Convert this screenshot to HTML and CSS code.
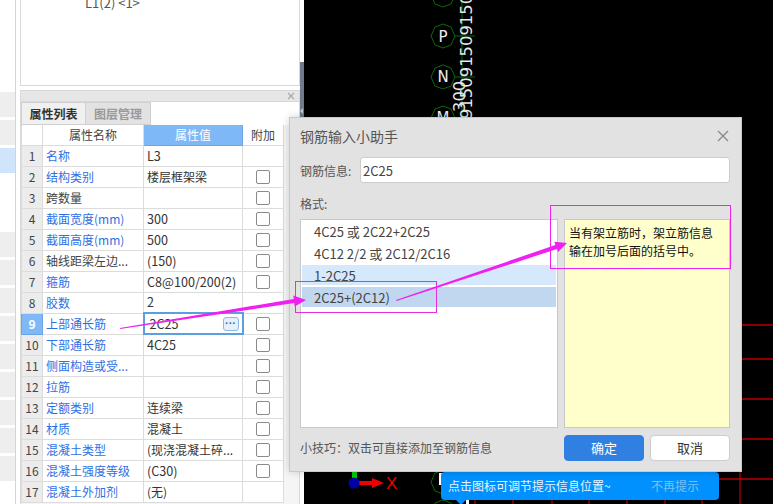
FILE: index.html
```html
<!DOCTYPE html>
<html lang="zh-CN">
<head>
    <meta charset="UTF-8">
    <title>钢筋输入小助手</title>
    <link rel="stylesheet" href="styles.css">
</head>
<body>
    <div class="page">
        <div class="nav">
            <div class="nav-row"></div>
            <div class="nav-row"></div>
            <div class="nav-row active"></div>
            <div class="nav-row blank"></div>
            <div class="nav-row blank"></div>
            <div class="nav-row"></div>
            <div class="nav-row"></div>
            <div class="nav-row"></div>
            <div class="nav-row"></div>
            <div class="nav-row"></div>
            <div class="nav-row"></div>
            <div class="nav-row"></div>
            <div class="nav-row"></div>
            <div class="nav-row"></div>
        </div>

        <div class="side">
            <div class="tree">
                <div class="tree-item">L1(2) &lt;1&gt;</div>
            </div>
            <div class="props">
                <div class="props-bar">
                    <svg class="props-close" width="8" height="8" viewBox="0 0 8 8"><path d="M1 1l6 6M7 1L1 7"/></svg>
                </div>
                <div class="tabs">
                    <div class="tab active">属性列表</div>
                    <div class="tab">图层管理</div>
                </div>
                <div class="table-wrap">
                    <table class="prop-table">
                        <colgroup>
                            <col class="col-num"><col class="col-name"><col class="col-value"><col class="col-add">
                        </colgroup>
                        <tr class="head">
                            <th></th><th>属性名称</th><th class="current">属性值</th><th>附加</th>
                        </tr>
                        <tr><td class="num">1</td><td class="name">名称</td><td class="latin">L3</td><td></td></tr>
                        <tr><td class="num">2</td><td class="name">结构类别</td><td>楼层框架梁</td><td class="add"><input type="checkbox"></td></tr>
                        <tr><td class="num">3</td><td class="name plain">跨数量</td><td></td><td class="add"><input type="checkbox"></td></tr>
                        <tr><td class="num">4</td><td class="name">截面宽度(mm)</td><td class="latin">300</td><td class="add"><input type="checkbox"></td></tr>
                        <tr><td class="num">5</td><td class="name">截面高度(mm)</td><td class="latin">500</td><td class="add"><input type="checkbox"></td></tr>
                        <tr><td class="num">6</td><td class="name plain">轴线距梁左边...</td><td class="latin">(150)</td><td class="add"><input type="checkbox"></td></tr>
                        <tr><td class="num">7</td><td class="name">箍筋</td><td class="latin">C8@100/200(2)</td><td class="add"><input type="checkbox"></td></tr>
                        <tr><td class="num">8</td><td class="name">胶数</td><td class="latin">2</td><td></td></tr>
                        <tr class="selected">
                            <td class="num">9</td><td class="name">上部通长筋</td>
                            <td class="editing latin"><div class="edit-box"><span>2C25</span><span class="more">···</span></div></td>
                            <td class="add"><input type="checkbox"></td>
                        </tr>
                        <tr><td class="num">10</td><td class="name">下部通长筋</td><td class="latin">4C25</td><td class="add"><input type="checkbox"></td></tr>
                        <tr><td class="num">11</td><td class="name">侧面构造或受...</td><td></td><td class="add"><input type="checkbox"></td></tr>
                        <tr><td class="num">12</td><td class="name">拉筋</td><td></td><td class="add"><input type="checkbox"></td></tr>
                        <tr><td class="num">13</td><td class="name">定额类别</td><td>连续梁</td><td class="add"><input type="checkbox"></td></tr>
                        <tr><td class="num">14</td><td class="name">材质</td><td>混凝土</td><td class="add"><input type="checkbox"></td></tr>
                        <tr><td class="num">15</td><td class="name">混凝土类型</td><td>(现浇混凝土碎...</td><td class="add"><input type="checkbox"></td></tr>
                        <tr><td class="num">16</td><td class="name">混凝土强度等级</td><td class="latin">(C30)</td><td class="add"><input type="checkbox"></td></tr>
                        <tr><td class="num">17</td><td class="name">混凝土外加剂</td><td>(无)</td><td></td></tr>
                    </table>
                </div>
            </div>
        </div>

        <div class="rail"><div class="rail-thumb"></div></div>

        <div class="canvas">
            <svg class="drawing" width="469" height="504" viewBox="304 0 469 504">
                <g class="grid">
                    <path d="M462 0V118M455 36H475M455 77H475"/>
                    <polygon points="443,-17 451,-14 455,-5 451,4 443,7 435,4 431,-5 435,-14"/>
                    <polygon points="443,24 451,27 455,36 451,45 443,48 435,45 431,36 435,27"/>
                    <polygon points="443,65 451,68 455,77 451,86 443,89 435,86 431,77 435,68"/>
                    <polygon points="443,106 451,109 455,118 451,127 443,130 435,127 431,118 435,109"/>
                    <polygon points="443,470 451,473 455,482 451,491 443,494 435,491 431,482 435,473"/>
                    <polygon points="443,500 451,503 455,512 435,512 435,503"/>
                </g>
                <text class="axis-label" x="443" y="42">P</text>
                <text class="axis-label" x="443" y="82">N</text>
                <text class="axis-label" x="443" y="123">M</text>
                <text class="dim" transform="translate(472 119) rotate(-90)">9150915091509150</text>
                <text class="dim" transform="translate(465 112) rotate(-90)">300</text>
                <rect class="white" x="439" y="473" width="6" height="12"/>
                <rect class="white" x="466" y="500" width="3" height="4"/>
                <g class="red-dark">
                    <path d="M742 325H773M742 359H773M742 399H773M742 439H773M719 479H773"/>
                </g>
                <g class="red">
                    <path d="M475 500V504M513 500V504M552 500V504M589 500V504M627 500V504M665 500V504M702 500V504M740 472V504"/>
                </g>
                <rect x="352" y="472" width="5" height="8" fill="#00c800"/>
                <polygon points="358,481 372,481 372,478 384,483 372,488 372,485 358,485" fill="#f00000"/>
                <circle cx="354" cy="483" r="5.5" fill="#0000a8"/>
                <text class="axis-x" x="386" y="489">X</text>
            </svg>
        </div>

        <div class="toast">
            <span>点击图标可调节提示信息位置~</span>
            <span class="toast-off">不再提示</span>
        </div>

        <div class="dialog">
            <div class="dialog-title">
                <span>钢筋输入小助手</span>
                <svg class="dialog-close" width="12" height="12" viewBox="0 0 12 12"><path d="M1 1l10 10M11 1L1 11"/></svg>
            </div>
            <div class="field">
                <label for="rebar">钢筋信息:</label>
                <input id="rebar" type="text" value="2C25">
            </div>
            <div class="format-label">格式:</div>
            <div class="format-body">
                <div class="format-list">
                    <div class="format-item">4C25 或 2C22+2C25</div>
                    <div class="format-item">4C12 2/2 或 2C12/2C16</div>
                    <div class="format-item hover">1-2C25</div>
                    <div class="format-item picked">2C25+(2C12)</div>
                </div>
                <div class="format-tip">当有架立筋时&#65292;架立筋信息输在加号后面的括号中。</div>
            </div>
            <div class="dialog-foot">
                <span class="hint">小技巧&#65306;双击可直接添加至钢筋信息</span>
                <div class="buttons">
                    <button class="btn primary">确定</button>
                    <button class="btn">取消</button>
                </div>
            </div>
        </div>

        <svg class="marks" width="773" height="504" viewBox="0 0 773 504">
            <rect class="mark-box dim-pink" x="295.5" y="281.5" width="141" height="31"/>
            <rect class="mark-box" x="550.5" y="205.5" width="180" height="63"/>
            <polygon class="mark-arrow" points="120,328 120,329 294.2,303 294.7,306.5 306,300 293.3,295.5 293.8,299"/>
            <polygon class="mark-arrow" points="396,300 396.5,301 557,249 558,252 567,243 554.4,241.8 555.3,245"/>
        </svg>
    </div>
</body>
</html>
```

FILE: styles.css
```css
* { box-sizing: border-box; }
body {
    margin: 0;
    background: #fff;
    font-family: "Noto Sans CJK SC", "Liberation Sans", sans-serif;
    font-size: 12px;
    color: #333;
}
.page {
    position: relative;
    display: flex;
    width: 773px;
    height: 504px;
    overflow: hidden;
}

/* left strip */
.nav {
    width: 16px;
    flex-shrink: 0;
    padding-top: 92px;
    border-right: 1px solid #d4d4d4;
    display: flex;
    flex-direction: column;
    gap: 3px;
}
.nav-row {
    height: 25px;
    background: #eee;
}
.nav-row.active { background: #d0e4fb; }
.nav-row.blank { background: #fff; }

/* side panels */
.side {
    width: 284px;
    flex-shrink: 0;
    padding-left: 4px;
    display: flex;
    flex-direction: column;
    gap: 4px;
}
.tree {
    height: 86px;
    flex-shrink: 0;
    border: 1px solid #d8d8d8;
    border-top: 0;
    overflow: hidden;
}
.tree-item {
    margin: -5px 0 0 64px;
    line-height: 16px;
    font-size: 13px;
    color: #555;
}
.props {
    flex: 1;
    min-height: 0;
    border: 1px solid #d8d8d8;
    border-bottom: 0;
    display: flex;
    flex-direction: column;
}
.props-bar {
    height: 11px;
    flex-shrink: 0;
    background: #e6e6e6;
    border-bottom: 1px solid #d8d8d8;
    display: flex;
    align-items: center;
    justify-content: flex-end;
    padding-right: 4px;
}
.props-close path {
    fill: none;
    stroke: #aaa;
    stroke-width: 1.2;
}
.tabs {
    height: 23px;
    flex-shrink: 0;
    display: flex;
}
.tab {
    width: 65px;
    text-align: center;
    line-height: 22px;
    font-weight: 700;
    color: #999;
    background: #e2e2e2;
    border: 1px solid #d0d0d0;
    border-left: 0;
}
.tab.active {
    width: 65px;
    color: #333;
    background: #f0f0f0;
    border-left: 1px solid #d0d0d0;
}

/* property table */
.table-wrap {
    flex: 1;
    background: #f5f5f5;
    overflow: hidden;
}
.prop-table {
    table-layout: fixed;
    width: 262px;
    border-collapse: collapse;
    background: #fff;
}
.col-num { width: 21px; }
.col-name { width: 101px; }
.col-value { width: 99px; }
.col-add { width: 41px; }
.prop-table th,
.prop-table td {
    height: 21px;
    padding: 0 3px;
    border: 1px solid #dcdcdc;
    font-weight: 400;
    line-height: 16px;
    white-space: nowrap;
    overflow: hidden;
}
.prop-table th {
    height: 20px;
    text-align: center;
    color: #444;
}
.prop-table tr:first-child th { border-top: 0; }
.prop-table th.current {
    background: #7eb8f7;
    color: #fff;
    border-color: #6aa6e6;
}
.prop-table td.num {
    padding: 0;
    background: #ececec;
    text-align: center;
    color: #444;
}
.prop-table td.name { color: #2f6fe4; }
.prop-table td.name.plain { color: #444; }
.prop-table td.latin { font-size: 12.6px; }
.prop-table td.add {
    padding: 0;
    text-align: center;
}
.prop-table input[type="checkbox"] {
    appearance: none;
    display: block;
    width: 14px;
    height: 14px;
    margin: 0 auto;
    background: #fff;
    border: 1px solid #8a8a8a;
    border-radius: 2px;
}
.prop-table .selected td.num {
    background: #7eb8f7;
    color: #fff;
    font-weight: 700;
    border-color: #6aa6e6;
}
.prop-table td.editing {
    padding: 0;
    border: 2px solid #5a9fe0;
}
.edit-box {
    display: flex;
    align-items: center;
    justify-content: space-between;
    padding: 0 3px 0 5px;
}
.more {
    width: 16px;
    height: 14px;
    background: #e6f0fb;
    border: 1px solid #8db9e8;
    border-radius: 3px;
    color: #2f6fb8;
    font-family: "Liberation Sans", sans-serif;
    font-weight: 700;
    font-size: 11px;
    line-height: 11px;
    text-align: center;
}

/* drawing area */
.rail {
    width: 4px;
    flex-shrink: 0;
    padding-top: 62px;
}
.rail-thumb {
    position: relative;
    height: 55px;
    background: #6d7b8a;
}
.rail-thumb::after {
    content: '';
    position: absolute;
    left: 0;
    bottom: 3px;
    border: 3px solid transparent;
    border-left: 0;
    border-right: 3px solid #c4c8cc;
}
.canvas {
    flex: 1;
    background: #000;
}
.drawing { display: block; }
.grid polygon,
.grid path {
    fill: none;
    stroke: #0a6a0a;
    stroke-width: 1;
}
.axis-label {
    fill: #eee;
    font-family: "DejaVu Sans", sans-serif;
    font-size: 15px;
    text-anchor: middle;
}
.dim {
    fill: #e8e8e8;
    font-family: "DejaVu Sans", sans-serif;
    font-size: 16.4px;
}
.white { fill: #fff; }
.red-dark path {
    fill: none;
    stroke: #8a0000;
    stroke-width: 2;
}
.red path {
    fill: none;
    stroke: #e00000;
    stroke-width: 1;
}
.axis-x {
    fill: #f00000;
    font-family: "Liberation Sans", sans-serif;
    font-size: 17px;
}

/* tip bar under the dialog */
.toast {
    position: absolute;
    left: 441px;
    top: 472px;
    width: 278px;
    height: 28px;
    padding: 0 20px 0 7px;
    background: #0091ff;
    border-radius: 4px;
    color: #e8f4ff;
    line-height: 28px;
    display: flex;
    justify-content: space-between;
}
.toast::after {
    content: '';
    position: absolute;
    left: 15px;
    top: 28px;
    border: 5px solid transparent;
    border-bottom: 0;
    border-top: 5px solid #0091ff;
}
.toast-off { color: #7cc0f5; }

/* dialog */
.dialog {
    position: absolute;
    left: 289px;
    top: 117px;
    width: 453px;
    height: 355px;
    padding: 0 11px 0 10px;
    background: #e2e2e2;
    border: 1px solid #c8c8c8;
    box-shadow: 0 0 8px rgba(0, 0, 0, 0.18);
    display: flex;
    flex-direction: column;
}
.dialog-title {
    height: 39px;
    flex-shrink: 0;
    padding: 0 1px 3px 0;
    display: flex;
    align-items: center;
    justify-content: space-between;
    font-size: 14px;
    color: #555;
}
.dialog-close path {
    fill: none;
    stroke: #888;
    stroke-width: 1.3;
}
.field {
    display: flex;
    align-items: center;
    height: 26px;
    flex-shrink: 0;
    color: #555;
}
.field label { width: 60px; }
.field input {
    flex: 1;
    height: 26px;
    padding: 0 2px;
    background: #fff;
    border: 1px solid #ccc;
    border-radius: 3px;
    font: inherit;
    font-size: 13px;
    color: #444;
}
.format-label {
    height: 36px;
    padding-top: 12px;
    flex-shrink: 0;
    line-height: 18px;
    color: #555;
}
.format-body {
    height: 209px;
    flex-shrink: 0;
    display: flex;
    gap: 6px;
}
.format-list {
    width: 258px;
    padding: 1px;
    background: #fff;
    border: 1px solid #c8c8c8;
    display: flex;
    flex-direction: column;
    gap: 2px;
}
.format-item {
    height: 20px;
    padding-left: 12px;
    line-height: 21px;
    font-size: 13px;
    color: #444;
}
.format-item.hover { background: #d5e8fc; }
.format-item.picked { background: #c0d7ef; }
.format-tip {
    width: 166px;
    padding: 4px 12px 4px 4px;
    background: #ffffcc;
    border: 1px solid #c8c8c8;
    color: #111;
    line-height: 18px;
}
.dialog-foot {
    flex: 1;
    display: flex;
    align-items: center;
    justify-content: space-between;
    padding-bottom: 4px;
}
.hint { color: #555; }
.buttons {
    display: flex;
    gap: 6px;
}
.btn {
    width: 80px;
    height: 26px;
    padding: 0;
    background: #fff;
    border: 1px solid #ccc;
    border-radius: 4px;
    font: inherit;
    font-size: 13px;
    color: #333;
}
.btn.primary {
    background: #2f80e0;
    border-color: #2f80e0;
    color: #fff;
}

/* pink annotations on top of the screenshot */
.marks {
    position: absolute;
    left: 0;
    top: 0;
    pointer-events: none;
}
.mark-box {
    fill: none;
    stroke: #f020f0;
    stroke-width: 1;
}
.mark-box.dim-pink { stroke: #e030e0; }
.mark-arrow { fill: #f020f0; }
```
